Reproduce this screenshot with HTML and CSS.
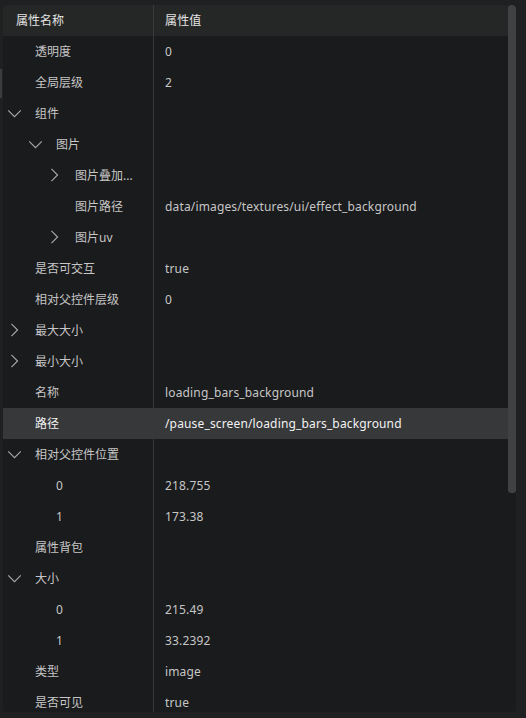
FILE: index.html
```html
<!DOCTYPE html>
<html lang="zh">
<head>
    <meta charset="UTF-8">
    <title>属性</title>
    <link rel="stylesheet" href="styles.css">
</head>
<body>
    <div class="splitter"></div>
    <div class="panel">
        <div class="table">
            <div class="row header">
                <div class="cell name">属性名称</div>
                <div class="cell value">属性值</div>
            </div>
            <div class="row lv0"><div class="cell name"><span class="arrow"></span>透明度</div><div class="cell value">0</div></div>
            <div class="row lv0"><div class="cell name"><span class="arrow"></span>全局层级</div><div class="cell value">2</div></div>
            <div class="row lv0"><div class="cell name"><span class="arrow"><svg class="down" viewBox="0 0 16 10"><polyline points="1 1.5 8 8.5 15 1.5"/></svg></span>组件</div><div class="cell value"></div></div>
            <div class="row lv1"><div class="cell name"><span class="arrow"><svg class="down" viewBox="0 0 16 10"><polyline points="1 1.5 8 8.5 15 1.5"/></svg></span>图片</div><div class="cell value"></div></div>
            <div class="row lv2"><div class="cell name"><span class="arrow"><svg class="right" viewBox="0 0 10 16"><polyline points="1.5 1 8.5 8 1.5 15"/></svg></span>图片叠加...</div><div class="cell value"></div></div>
            <div class="row lv2"><div class="cell name"><span class="arrow"></span>图片路径</div><div class="cell value">data/images/textures/ui/effect_background</div></div>
            <div class="row lv2"><div class="cell name"><span class="arrow"><svg class="right" viewBox="0 0 10 16"><polyline points="1.5 1 8.5 8 1.5 15"/></svg></span>图片uv</div><div class="cell value"></div></div>
            <div class="row lv0"><div class="cell name"><span class="arrow"></span>是否可交互</div><div class="cell value">true</div></div>
            <div class="row lv0"><div class="cell name"><span class="arrow"></span>相对父控件层级</div><div class="cell value">0</div></div>
            <div class="row lv0"><div class="cell name"><span class="arrow"><svg class="right" viewBox="0 0 10 16"><polyline points="1.5 1 8.5 8 1.5 15"/></svg></span>最大大小</div><div class="cell value"></div></div>
            <div class="row lv0"><div class="cell name"><span class="arrow"><svg class="right" viewBox="0 0 10 16"><polyline points="1.5 1 8.5 8 1.5 15"/></svg></span>最小大小</div><div class="cell value"></div></div>
            <div class="row lv0"><div class="cell name"><span class="arrow"></span>名称</div><div class="cell value">loading_bars_background</div></div>
            <div class="row lv0 selected"><div class="cell name"><span class="arrow"></span>路径</div><div class="cell value">/pause_screen/loading_bars_background</div></div>
            <div class="row lv0"><div class="cell name"><span class="arrow"><svg class="down" viewBox="0 0 16 10"><polyline points="1 1.5 8 8.5 15 1.5"/></svg></span>相对父控件位置</div><div class="cell value"></div></div>
            <div class="row lv1"><div class="cell name"><span class="arrow"></span>0</div><div class="cell value">218.755</div></div>
            <div class="row lv1"><div class="cell name"><span class="arrow"></span>1</div><div class="cell value">173.38</div></div>
            <div class="row lv0"><div class="cell name"><span class="arrow"></span>属性背包</div><div class="cell value"></div></div>
            <div class="row lv0"><div class="cell name"><span class="arrow"><svg class="down" viewBox="0 0 16 10"><polyline points="1 1.5 8 8.5 15 1.5"/></svg></span>大小</div><div class="cell value"></div></div>
            <div class="row lv1"><div class="cell name"><span class="arrow"></span>0</div><div class="cell value">215.49</div></div>
            <div class="row lv1"><div class="cell name"><span class="arrow"></span>1</div><div class="cell value">33.2392</div></div>
            <div class="row lv0"><div class="cell name"><span class="arrow"></span>类型</div><div class="cell value">image</div></div>
            <div class="row lv0"><div class="cell name"><span class="arrow"></span>是否可见</div><div class="cell value">true</div></div>
        </div>
        <div class="scroll-track">
            <div class="scroll-thumb"></div>
        </div>
    </div>
</body>
</html>
```

FILE: styles.css
```css
/* Property inspector */
body {
    margin: 0;
    padding: 0;
    background: #1f2022;
    font-family: "Noto Sans", "Noto Sans CJK SC", sans-serif;
    font-size: 12px;
    color: #c6c6c6;
    height: 718px;
    overflow: hidden;
}

.splitter {
    position: absolute;
    left: 0;
    top: 69px;
    width: 2px;
    height: 29px;
    background: #3b3c3e;
}

.panel {
    margin: 5px 10px 0 3px;
    height: 707px;
    background: #1a1b1d;
    border-radius: 4px;
    overflow: hidden;
    display: flex;
}

.table {
    flex: 1;
    min-width: 0;
}

.row {
    display: flex;
    height: 31px;
}

.cell {
    display: flex;
    align-items: center;
    white-space: nowrap;
    padding-bottom: 1px;
    box-sizing: border-box;
}

.cell.name {
    width: 151px;
    flex-shrink: 0;
    border-right: 1px solid #38393b;
}

.cell.value {
    flex: 1;
    padding-left: 11px;
    letter-spacing: 0.15px;
}

.header {
    background: #252726;
    color: #e4e4e4;
}

.header .name {
    padding-left: 13px;
}

.selected {
    background: #37383a;
    color: #f2f2f2;
}

.arrow {
    width: 22px;
    margin-right: 10px;
    flex-shrink: 0;
    display: flex;
    align-items: center;
    justify-content: center;
}

.arrow svg {
    fill: none;
    stroke: #a8a8a8;
    stroke-width: 1.3;
}

.arrow .down {
    width: 15px;
    height: 9px;
}

.arrow .right {
    width: 9px;
    height: 14px;
}

.lv1 .name {
    padding-left: 21px;
}

.lv2 .name {
    padding-left: 40px;
}

.scroll-track {
    width: 8px;
    flex-shrink: 0;
}

.scroll-thumb {
    height: 488px;
    background: #404143;
    border-radius: 3px;
}
```
